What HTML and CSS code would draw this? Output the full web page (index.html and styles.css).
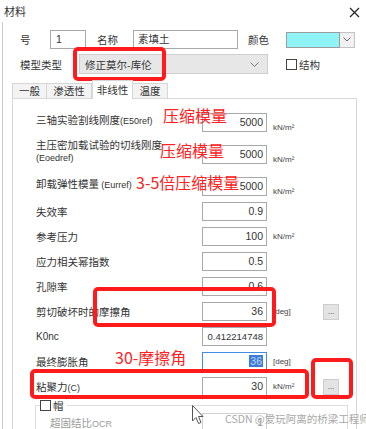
FILE: index.html
```html
<!DOCTYPE html>
<html lang="zh-CN">
<head>
    <meta charset="UTF-8">
    <meta name="viewport" content="width=device-width, initial-scale=1.0">
    <title>材料</title>
    <link rel="stylesheet" href="styles.css">
</head>
<body>
<div class="dialog">
    <div class="titlebar">
        <span>材料</span>
        <svg class="close" width="11" height="11" viewBox="0 0 11 11"><path d="M1 1L10 10M10 1L1 10" stroke="#222" stroke-width="1.2" fill="none"/></svg>
    </div>

    <div class="main">
        <div class="toprow">
            <span class="lbl-no">号</span>
            <div class="box f-no">1</div>
            <span class="lbl-name">名称</span>
            <div class="box f-name">素填土</div>
            <span class="lbl-color">颜色</span>
            <div class="swatch"></div>
            <div class="swatch-btn">
                <svg width="8" height="5" viewBox="0 0 8 5"><path d="M0.5 0.5L4 4L7.5 0.5" stroke="#666" fill="none"/></svg>
            </div>
        </div>

        <div class="typerow">
            <span class="lbl-type">模型类型</span>
            <div class="select">
                <span>修正莫尔-库伦</span>
                <svg width="9" height="5" viewBox="0 0 9 5"><path d="M0.5 0.5L4.5 4.5L8.5 0.5" stroke="#777" fill="none"/></svg>
            </div>
            <span class="check"></span>
            <span>结构</span>
        </div>

        <div class="tabs">
            <span class="tab t1">一般</span>
            <span class="tab t2">渗透性</span>
            <span class="tab t3 active">非线性</span>
            <span class="tab t4">温度</span>
        </div>

        <div class="panel">
            <div class="row tall r1">
                <span class="lbl">三轴实验割线刚度<small>(E50ref)</small></span>
                <div class="box field">5000</div>
                <span class="unit">kN/m²</span>
            </div>
            <div class="row tall r2">
                <span class="lbl two">主压密加载试验的切线刚度<br><small>(Eoedref)</small></span>
                <div class="box field">5000</div>
                <span class="unit">kN/m²</span>
            </div>
            <div class="row tall r3">
                <span class="lbl">卸载弹性模量 <small>(Eurref)</small></span>
                <div class="box field">5000</div>
                <span class="unit">kN/m²</span>
            </div>
            <div class="row">
                <span class="lbl">失效率</span>
                <div class="box field">0.9</div>
            </div>
            <div class="row">
                <span class="lbl">参考压力</span>
                <div class="box field">100</div>
                <span class="unit">kN/m²</span>
            </div>
            <div class="row">
                <span class="lbl">应力相关幂指数</span>
                <div class="box field">0.5</div>
            </div>
            <div class="row">
                <span class="lbl">孔隙率</span>
                <div class="box field">0.6</div>
            </div>
            <div class="row">
                <span class="lbl">剪切破坏时的摩擦角</span>
                <div class="box field">36</div>
                <span class="unit">[deg]</span>
                <span class="dots">...</span>
            </div>
            <div class="row">
                <span class="lbl latin">K0nc</span>
                <div class="box field long">0.412214748</div>
            </div>
            <div class="row">
                <span class="lbl">最终膨胀角</span>
                <div class="box field focus"><span class="sel">36</span></div>
                <span class="unit">[deg]</span>
            </div>
            <div class="row">
                <span class="lbl">粘聚力<small>(C)</small></span>
                <div class="box field">30</div>
                <span class="unit">kN/m²</span>
                <span class="dots">...</span>
            </div>

            <div class="group">
                <div class="group-head">
                    <span class="check"></span>
                    <span>帽</span>
                </div>
                <div class="row grow">
                    <span class="lbl muted">超固结比<small>OCR</small></span>
                    <div class="box field muted">1</div>
                </div>
            </div>
        </div>
    </div>

    <!-- annotations drawn over the dialog -->
    <div class="mark mark-type"></div>
    <div class="mark mark-phi"></div>
    <div class="mark mark-c"></div>
    <div class="mark mark-btn"></div>

    <span class="note n1">压缩模量</span>
    <span class="note n2">压缩模量</span>
    <span class="note n3">3-5倍压缩模量</span>
    <span class="note n4">30-摩擦角</span>

    <svg class="cursor" width="12" height="20" viewBox="0 0 12 20"><path d="M0.5 0.5L0.5 16L4 12.5L6.5 18.5L9 17.5L6.5 11.5L11 11.5Z" fill="#fff" stroke="#555" stroke-width="1"/></svg>

    <span class="watermark">CSDN @爱玩阿离的桥梁工程师</span>
</div>
</body>
</html>
```

FILE: styles.css
```css
body {
    margin: 0;
    background-color: #fff;
    font-family: "Noto Sans CJK SC", "Liberation Sans", sans-serif;
    font-size: 10.5px;
    color: #333;
}

.dialog {
    position: relative;
    width: 366px;
    height: 429px;
    overflow: hidden;
}

.titlebar {
    height: 22px;
    display: flex;
    align-items: center;
    justify-content: space-between;
    padding: 0 6px 0 4px;
    font-size: 11px;
    color: #333;
}

.close {
    margin-top: 3px;
}

.main {
    margin-left: 2px;
    border-left: 1px solid #cacaca;
    height: 407px;
    padding-top: 8px;
    box-sizing: border-box;
}

.box {
    box-sizing: border-box;
    border: 1px solid #a9a9a9;
    background-color: #fff;
}

/* first row */
.toprow {
    display: flex;
    align-items: center;
    height: 19px;
    padding-left: 17px;
}

.lbl-no {
    width: 30px;
}

.f-no {
    width: 36px;
    height: 19px;
    padding-left: 5px;
    line-height: 17px;
    font-family: "Liberation Sans", sans-serif;
}

.lbl-name {
    width: 36px;
    margin-left: 11px;
}

.f-name {
    width: 105px;
    height: 19px;
    padding-left: 4px;
    line-height: 16px;
}

.lbl-color {
    width: 38px;
    margin-left: 10px;
}

.swatch {
    width: 54px;
    height: 16px;
    box-sizing: border-box;
    border: 1px solid #9c9c9c;
    background-color: #8ff3f7;
}

.swatch-btn {
    width: 15px;
    height: 16px;
    box-sizing: border-box;
    border: 1px solid #c4c4c4;
    border-left: none;
    background-color: #f1f1f1;
    display: flex;
    align-items: center;
    justify-content: center;
}

/* model type row */
.typerow {
    display: flex;
    align-items: center;
    height: 20px;
    margin-top: 5px;
    padding-left: 17px;
}

.lbl-type {
    width: 59px;
}

.select {
    width: 189px;
    height: 20px;
    box-sizing: border-box;
    border: 1px solid #cfcfcf;
    background-color: #e7e7e7;
    display: flex;
    align-items: center;
    justify-content: space-between;
    padding: 0 8px 0 5px;
    color: #333;
}

.check {
    display: inline-block;
    width: 11px;
    height: 11px;
    box-sizing: border-box;
    border: 1px solid #444;
    background-color: #fff;
}

.typerow .check {
    margin: 0 2px 0 18px;
}

/* tabs */
.tabs {
    display: flex;
    align-items: flex-end;
    height: 18px;
    margin-top: 6px;
    padding-left: 9px;
    position: relative;
    z-index: 1;
    font-size: 10.5px;
}

.tab {
    height: 15px;
    box-sizing: border-box;
    border: 1px solid #d6d6d6;
    border-bottom: none;
    background-color: #f3f3f3;
    text-align: center;
    line-height: 14px;
}

.tab + .tab {
    border-left: none;
}

.t1 { width: 35px; }
.t2 { width: 45px; }
.t3 { width: 41px; }
.t4 { width: 35px; }

.tab.active {
    height: 19px;
    margin-bottom: -1px;
    background-color: #fff;
    border-left: 1px solid #d6d6d6;
    line-height: 17px;
}

/* panel */
.panel {
    margin-left: 9px;
    width: 345px;
    height: 340px;
    box-sizing: border-box;
    border: 1px solid #d8d8d8;
    border-bottom: none;
    padding-top: 8px;
    display: flex;
    flex-direction: column;
    gap: 6px;
}

.panel > * {
    flex-shrink: 0;
}

.row {
    display: flex;
    align-items: center;
    height: 19px;
    padding-left: 23px;
}

.row.tall {
    height: 26px;
    align-items: flex-end;
}

.row.r1 {
    height: 25px;
}

.row.tall .lbl {
    align-self: center;
}

.lbl {
    width: 166px;
    white-space: nowrap;
    color: #333;
}

.lbl small {
    font-family: "Liberation Sans", sans-serif;
    font-size: 9px;
}

.lbl.two {
    line-height: 12px;
}

.latin {
    font-family: "Liberation Sans", sans-serif;
    font-size: 10px;
}

.field {
    width: 65px;
    height: 19px;
    text-align: right;
    padding-right: 3px;
    line-height: 17px;
    font-family: "Liberation Sans", sans-serif;
    font-size: 10.5px;
    color: #333;
    overflow: hidden;
    white-space: nowrap;
}

.field.long {
    font-size: 9.5px;
}

.field.focus {
    border-color: #3f8fe3;
}

.sel {
    background-color: #3d7cd6;
    color: #bcd6f5;
    padding: 0 1px;
}

.unit {
    width: 50px;
    padding-left: 6px;
    font-family: "Liberation Sans", sans-serif;
    font-size: 8px;
    color: #444;
}

.dots {
    width: 16px;
    height: 16px;
    box-sizing: border-box;
    border: 1px solid #cdcdcd;
    background-color: #e3e3e3;
    text-align: center;
    line-height: 12px;
    font-size: 8px;
    color: #777;
}

/* cap group */
.group {
    margin: 3px 0 0 22px;
    width: 313px;
    height: 40px;
    box-sizing: border-box;
    border: 1px solid #dddddd;
    border-bottom: none;
}

.group-head {
    display: flex;
    align-items: center;
    gap: 2px;
    width: fit-content;
    height: 11px;
    margin: -6px 0 0 4px;
    padding-right: 3px;
    background-color: #fff;
}

.row.grow {
    padding-left: 14px;
    margin-top: 2px;
}

.row.grow .lbl {
    width: 152px;
}

.muted {
    color: #9a9a9a;
}

.field.muted {
    border-color: #cfcfcf;
}

/* annotations */
.mark {
    position: absolute;
    box-sizing: border-box;
    border: 4px solid #ff1b1b;
    border-radius: 5px;
}

.mark-type { left: 73px; top: 47px; width: 93px; height: 34px; }
.mark-phi { left: 93px; top: 287px; width: 183px; height: 40px; }
.mark-c { left: 30px; top: 369px; width: 279px; height: 30px; }
.mark-btn { left: 311px; top: 358px; width: 42px; height: 41px; }

.note {
    position: absolute;
    color: #ff2222;
    font-size: 16px;
    line-height: 16px;
    white-space: nowrap;
}

.n1 { left: 163px; top: 107px; }
.n2 { left: 160px; top: 142px; }
.n3 { left: 136px; top: 174px; }
.n4 { left: 115px; top: 349px; }

.cursor {
    position: absolute;
    left: 192px;
    top: 405px;
}

.watermark {
    position: absolute;
    left: 225px;
    top: 411px;
    font-size: 10.5px;
    color: #a8a8a8;
    white-space: nowrap;
}
```
